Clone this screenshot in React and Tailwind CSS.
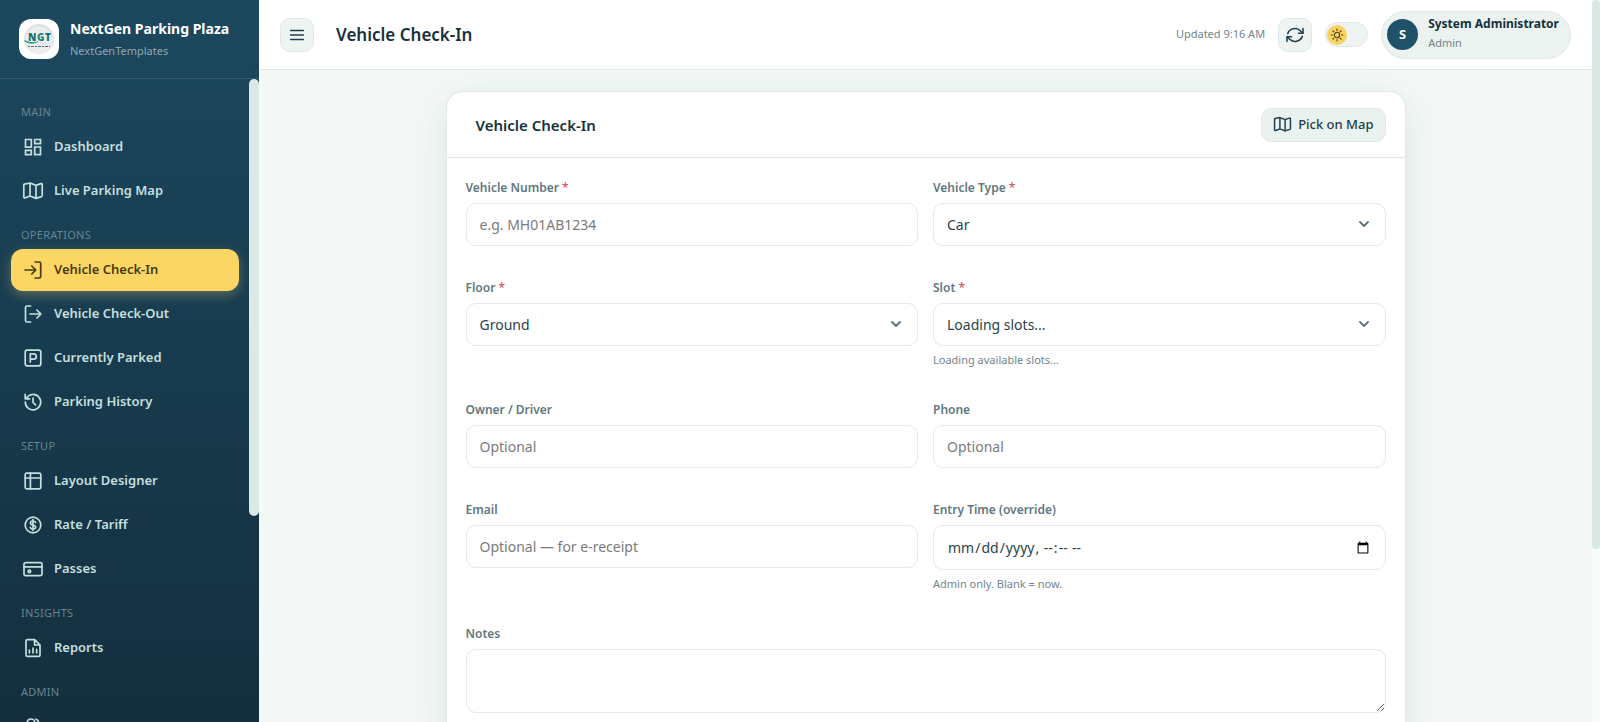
import { useState } from "react";

const strokeProps = {
  fill: "none",
  stroke: "currentColor",
  strokeWidth: 1.7,
  strokeLinecap: "round",
  strokeLinejoin: "round",
};

const icons = {
  dashboard: (
    <g strokeLinejoin="miter">
      <path d="M3.5 3.5h5.8v7.6H3.5zM12.7 3.5h5.8v4.2h-5.8zM12.7 11h5.8v7.6h-5.8zM3.5 14.4h5.8v4.2H3.5z" />
    </g>
  ),
  map: (
    <path d="M1.8 5v12.2c0 .6.6 1 1.2.7L8 16l6 2.4 5.4-1.8c.5-.2.8-.5.8-1V4.4c0-.6-.6-1-1.2-.8L14 5.4 8 3 2.6 4.1c-.5.1-.8.4-.8.9zM8 3v13M14 5.4v13" />
  ),
  checkIn: (
    <path d="M13.2 3h4c.9 0 1.5.6 1.5 1.5v13c0 .9-.6 1.5-1.5 1.5h-4M3 11h10.6M9.8 7l4 4-4 4" />
  ),
  checkOut: (
    <path d="M8.6 3H5c-.9 0-1.5.6-1.5 1.5v13c0 .9.6 1.5 1.5 1.5h3.6M8 11h10.6M14.9 7l4 4-4 4" />
  ),
  parked: (
    <>
      <rect x="3.2" y="3.2" width="15.6" height="15.6" rx="2" />
      <path d="M8.3 15V6.9h3.4a2.6 2.6 0 0 1 0 5.3H8.3" />
    </>
  ),
  history: (
    <>
      <path d="M4.4 7.2A7.7 7.7 0 1 1 3.3 11" />
      <path d="M3.2 3.4v4.4h4.4M11 7v4.4l2.6 2.4" />
    </>
  ),
  layout: (
    <>
      <rect x="3.2" y="3.2" width="15.6" height="15.6" rx="1.6" />
      <path d="M3.2 8h15.6M8.4 3.2v15.6" />
    </>
  ),
  rate: (
    <>
      <circle cx="11" cy="11" r="7.8" />
      <path d="M13.6 8.5c-.3-1-1.3-1.5-2.6-1.5-1.5 0-2.6.7-2.6 1.9 0 2.8 5.3 1.3 5.3 4.2 0 1.2-1.1 1.9-2.7 1.9-1.4 0-2.4-.6-2.7-1.6M11 5.5v11" />
    </>
  ),
  passes: (
    <>
      <rect x="2" y="4.6" width="18" height="13" rx="1.6" />
      <path d="M2 8.8h18" />
      <circle cx="7.4" cy="13.4" r="1.3" />
    </>
  ),
  reports: (
    <>
      <path d="M12.6 2.6H5.4c-.8 0-1.4.6-1.4 1.4v14c0 .8.6 1.4 1.4 1.4h11.2c.8 0 1.4-.6 1.4-1.4V8zM12.6 2.6V8H18" />
      <path d="M7.4 13.2v2.6M11 11v4.8M14.6 12.4v3.4" />
    </>
  ),
  users: (
    <>
      <circle cx="9" cy="7" r="4" />
      <path d="M2.5 19a6.5 6.5 0 0 1 13 0M14 3.2a4 4 0 0 1 0 7.6M16.5 13.5c1.9 1 3 3 3 5.5" />
    </>
  ),
  refresh: (
    <>
      <path d="M3 9.6a8.2 7.4 0 0 1 14.2-3l2.4 2.2M19 12.4a8.2 7.4 0 0 1-14.2 3l-2.4-2.2" />
      <path d="M19.8 4v5h-5M2.2 18v-5h5" />
    </>
  ),
  menu: <path d="M4 6h14M4 11h14M4 16h14" />,
  sun: (
    <>
      <circle cx="11" cy="11" r="4.2" />
      <path d="M11 1.8v2M11 18.2v2M1.8 11h2M18.2 11h2M4.5 4.5l1.4 1.4M16.1 16.1l1.4 1.4M4.5 17.5l1.4-1.4M16.1 5.9l1.4-1.4" />
    </>
  ),
};

function Icon({ name, className = "size-[22px]" }) {
  return (
    <svg viewBox="0 0 22 22" className={`shrink-0 ${className}`} aria-hidden="true" {...strokeProps}>
      {icons[name]}
    </svg>
  );
}

const sections = [
  {
    title: "MAIN",
    items: [
      { label: "Dashboard", icon: "dashboard" },
      { label: "Live Parking Map", icon: "map" },
    ],
  },
  {
    title: "OPERATIONS",
    items: [
      { label: "Vehicle Check-In", icon: "checkIn", active: true },
      { label: "Vehicle Check-Out", icon: "checkOut" },
      { label: "Currently Parked", icon: "parked" },
      { label: "Parking History", icon: "history" },
    ],
  },
  {
    title: "SETUP",
    items: [
      { label: "Layout Designer", icon: "layout" },
      { label: "Rate / Tariff", icon: "rate" },
      { label: "Passes", icon: "passes" },
    ],
  },
  {
    title: "INSIGHTS",
    items: [{ label: "Reports", icon: "reports" }],
  },
  {
    title: "ADMIN",
    items: [{ label: "User Management", icon: "users" }],
  },
];

function Logo() {
  return (
    <div className="flex size-10 shrink-0 items-center justify-center rounded-xl bg-white">
      <svg viewBox="0 0 32 32" className="size-8" role="img" aria-label="NGT">
        <circle cx="16" cy="16" r="15" fill="#dfe2e3" />
        <circle cx="16" cy="17" r="13.5" fill="#eceeee" />
        <path d="M1 18c6 4 11 3 15 0-4 1-10 2-14-1z" fill="#2a9d94" />
        <text x="5" y="18" fontSize="10" fontWeight="800" fill="#17706f" fontFamily="Open Sans, sans-serif">
          N
        </text>
        <text x="14" y="18" fontSize="10" fontWeight="800" fill="#1c8580" fontFamily="Open Sans, sans-serif">
          G
        </text>
        <text x="22" y="18" fontSize="10" fontWeight="800" fill="#17706f" fontFamily="Open Sans, sans-serif">
          T
        </text>
        <path d="M5 23.5h22" stroke="#5d6b70" strokeWidth="1.2" strokeDasharray="2 1 3 1" />
      </svg>
    </div>
  );
}

function Sidebar() {
  return (
    <aside className="flex w-[259px] shrink-0 flex-col overflow-hidden bg-linear-to-b from-[#1c485f] to-[#132f3e]">
      <div className="flex h-[79px] shrink-0 items-center gap-[11px] border-b border-white/10 px-[19px]">
        <Logo />
        <div className="whitespace-nowrap">
          <div className="text-sm leading-5 font-bold text-white">NextGen Parking Plaza</div>
          <div className="mt-1 text-[11px] leading-4 text-[#8fa9b3]">NextGenTemplates</div>
        </div>
      </div>
      <div className="flex min-h-0 flex-1">
        <nav className="flex-1 overflow-hidden pt-3 pr-[10px] pl-[11px]">
          {sections.map((section) => (
            <div key={section.title}>
              <div className="px-[10px] pt-3 pb-1.5 text-[11px] leading-[17px] tracking-wide text-[#67848f]">
                {section.title}
              </div>
              {section.items.map((item) => (
                <a
                  key={item.label}
                  href="#"
                  aria-current={item.active ? "page" : undefined}
                  className={
                    item.active
                      ? "mb-0.5 flex h-[42px] items-center gap-2.5 rounded-xl bg-[#fbd664] px-[11px] text-[13px] font-semibold whitespace-nowrap text-[#4a3a10] shadow-[0_4px_12px_rgba(251,214,100,0.3)]"
                      : "mb-0.5 flex h-[42px] items-center gap-2.5 rounded-xl px-[11px] text-[13px] font-semibold whitespace-nowrap text-[#c5dfdf]"
                  }
                >
                  <Icon name={item.icon} />
                  {item.label}
                </a>
              ))}
            </div>
          ))}
        </nav>
        <div className="w-[10px]">
          <div className="h-[68%] rounded-full bg-[#dbe8e5]" />
        </div>
      </div>
    </aside>
  );
}

function Topbar() {
  const [dark, setDark] = useState(false);

  return (
    <header className="flex h-[70px] shrink-0 items-center border-b border-[#dfe8e6] bg-white px-[21px] whitespace-nowrap">
      <button
        type="button"
        aria-label="Toggle menu"
        className="flex size-[34px] items-center justify-center rounded-[10px] border border-[#dfeae6] bg-[#eef4f1] text-[#1f3d4b]"
      >
        <Icon name="menu" className="size-5" />
      </button>
      <h1 className="ml-[22px] text-[17px] leading-6 font-semibold text-[#17303c]">Vehicle Check-In</h1>

      <div className="ml-auto flex items-center gap-[13px]">
        <span className="text-[11px] text-[#71858d]">Updated 9:16 AM</span>
        <button
          type="button"
          aria-label="Refresh"
          className="flex size-[34px] items-center justify-center rounded-[10px] border border-[#dfeae6] bg-[#eef4f1] text-[#1f3d4b]"
        >
          <Icon name="refresh" className="size-5" />
        </button>
        <button
          type="button"
          role="switch"
          aria-checked={dark}
          aria-label="Dark theme"
          onClick={() => setDark(!dark)}
          className="flex h-[25px] w-[43px] items-center rounded-full border border-[#dfeae6] bg-[#eef4f1] p-px"
        >
          <span className="flex size-5 items-center justify-center rounded-full bg-[#f9d361] text-[#4a3a10]">
            <Icon name="sun" className="size-3.5" />
          </span>
        </button>
        <button
          type="button"
          className="flex h-12 items-center gap-2.5 rounded-full border border-[#dfeae6] bg-[#ebf2ef] pr-[11px] pl-[5px] text-left"
        >
          <span className="flex size-[31px] items-center justify-center rounded-full bg-[#1f5168] text-[13px] font-bold text-white">
            S
          </span>
          <span className="flex flex-col pb-1">
            <span className="text-xs leading-[19px] font-bold text-[#17303c]">System Administrator</span>
            <span className="text-[11px] leading-[19px] text-[#71858d]">Admin</span>
          </span>
        </button>
      </div>
    </header>
  );
}

const controlClass =
  "block h-[43px] w-full rounded-[10px] border border-[#e2ebe9] bg-white px-[13px] text-sm text-[#2b424d] placeholder:text-[#7b7b7b] outline-none focus:border-[#1f5168]";

function Field({ id, label, required, hint, className, children }) {
  return (
    <div className={className}>
      <label htmlFor={id} className="mb-[5px] block text-xs leading-5 font-semibold text-[#627780]">
        {label}
        {required && <span className="font-normal text-[#d0455a]"> *</span>}
      </label>
      {children}
      {hint && <p className="mt-[5px] text-[11px] leading-[17px] text-[#71858d]">{hint}</p>}
    </div>
  );
}

function Select({ id, options }) {
  return (
    <div className="relative">
      <select id={id} className={`${controlClass} appearance-none`}>
        {options.map((option) => (
          <option key={option}>{option}</option>
        ))}
      </select>
      <svg
        viewBox="0 0 10 6"
        className="pointer-events-none absolute top-[18px] right-[17px] h-1.5 w-2.5 text-[#5d737c]"
        fill="none"
        stroke="currentColor"
        strokeWidth="1.8"
        strokeLinecap="round"
        strokeLinejoin="round"
        aria-hidden="true"
      >
        <path d="M1 1l4 4 4-4" />
      </svg>
    </div>
  );
}

function CheckInForm() {
  return (
    <section className="mx-auto w-full max-w-[960px] rounded-2xl border border-[#dfe9e6] bg-white shadow-[0_10px_40px_rgba(28,72,95,0.12)]">
      <div className="flex h-[66px] items-center justify-between border-b border-[#dfe8e6] pr-[19px] pl-[29px]">
        <h2 className="text-[15px] leading-6 font-semibold text-[#17303c]">Vehicle Check-In</h2>
        <button
          type="button"
          className="flex h-[34px] items-center gap-1.5 rounded-[10px] border border-[#dfeae6] bg-[#eaf2ef] px-[11px] text-[13px] font-medium text-[#1f3d4b]"
        >
          <Icon name="map" className="size-[19px]" />
          Pick on Map
        </button>
      </div>

      <form
        className="grid grid-cols-2 gap-x-[15px] gap-y-8 px-[19px] pt-5 pb-8"
        onSubmit={(ev) => ev.preventDefault()}
      >
        <Field id="vehicleNumber" label="Vehicle Number" required>
          <input id="vehicleNumber" type="text" placeholder="e.g. MH01AB1234" className={controlClass} />
        </Field>
        <Field id="vehicleType" label="Vehicle Type" required>
          <Select id="vehicleType" options={["Car"]} />
        </Field>
        <Field id="floor" label="Floor" required>
          <Select id="floor" options={["Ground"]} />
        </Field>
        <Field id="slot" label="Slot" required hint="Loading available slots...">
          <Select id="slot" options={["Loading slots..."]} />
        </Field>
        <Field id="owner" label="Owner / Driver">
          <input id="owner" type="text" placeholder="Optional" className={controlClass} />
        </Field>
        <Field id="phone" label="Phone">
          <input id="phone" type="tel" placeholder="Optional" className={controlClass} />
        </Field>
        <Field id="email" label="Email">
          <input id="email" type="email" placeholder="Optional — for e-receipt" className={controlClass} />
        </Field>
        <Field id="entryTime" label="Entry Time (override)" hint="Admin only. Blank = now.">
          <input
            id="entryTime"
            type="datetime-local"
            className="block h-[45px] w-full rounded-[10px] border border-[#e2ebe9] bg-white px-[13px] text-sm text-[#2b424d] outline-none"
          />
        </Field>
        <Field id="notes" label="Notes" className="col-span-2">
          <textarea
            id="notes"
            className="block h-16 w-full resize-y rounded-[10px] border border-[#e2ebe9] bg-white px-[13px] py-2.5 text-sm text-[#2b424d] outline-none"
          />
        </Field>
      </form>
    </section>
  );
}

export default function App() {
  return (
    <div className="flex h-screen overflow-hidden bg-[#f4f9f7] font-['Noto_Sans','Open_Sans',sans-serif]">
      <Sidebar />
      <div className="flex min-w-0 flex-1 flex-col">
        <Topbar />
        <main className="min-h-0 flex-1 overflow-hidden px-6 pt-[21px]">
          <CheckInForm />
        </main>
      </div>
      <div className="w-2 shrink-0 bg-[#f8fbfa]">
        <div className="h-[76%] rounded-full bg-[#dae8e4]" />
      </div>
    </div>
  );
}
